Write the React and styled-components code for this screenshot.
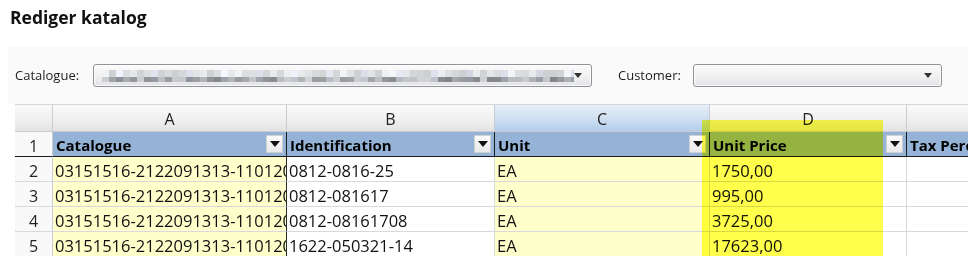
import React from "react";
import styled, { createGlobalStyle } from "styled-components";

const Global = createGlobalStyle`
  html, body { margin: 0; padding: 0; background: #ffffff; }
  body { font-family: "Open Sans", "Noto Sans", sans-serif; color: #000; overflow: hidden; }
`;

const Page = styled.div`
  width: 968px;
  height: 256px;
  overflow: hidden;
`;

const Title = styled.h1`
  margin: 0;
  padding: 5px 0 0 10px;
  font-size: 17.5px;
  line-height: 24px;
  font-weight: 700;
  color: #111;
`;

const FilterPanel = styled.div`
  margin: 18px 0 0 8px;
  height: 57px;
  background: #fafafa;
  display: flex;
  align-items: center;
  padding-left: 7px;
`;

const Label = styled.label`
  font-size: 13px;
  color: #1e1e1e;
  width: ${(p) => p.$w}px;
  margin-left: ${(p) => p.$ml || 0}px;
  flex: none;
  line-height: 16px;
  margin-top: -2px;
`;

const Combo = styled.div`
  box-sizing: border-box;
  width: ${(p) => p.$w}px;
  height: 23px;
  flex: none;
  border: 1px solid #8f9398;
  border-radius: 3px;
  background: linear-gradient(#fbfbfb 0%, #f1f1f1 50%, #e3e4e6 100%);
  box-shadow: inset 0 0 0 1px rgba(255, 255, 255, 0.8);
  display: flex;
  align-items: center;
  padding: 0 9px 0 8px;
`;

const Mosaic = styled.div`
  flex: 1;
  height: 12px;
  display: grid;
  grid-template-rows: 7px 5px;
  grid-auto-flow: column;
  grid-auto-columns: 7px;
  overflow: hidden;
`;

const Tile = styled.span`
  display: block;
`;

const Caret = styled.span`
  margin-left: auto;
  width: 0;
  height: 0;
  border-left: 4px solid transparent;
  border-right: 4px solid transparent;
  border-top: 5px solid #333;
  flex: none;
`;

const GridWrap = styled.div`
  position: relative;
  margin-left: 15px;
  width: 953px;
  overflow: hidden;
  border-top: 1px solid #d3d6da;
`;

const Grid = styled.div`
  display: grid;
  grid-template-columns: 38px 234px 208px 215px 197px 160px;
  grid-template-rows: 27px 25px repeat(4, 25px);
  width: max-content;
`;

const Cell = styled.div`
  box-sizing: border-box;
  overflow: hidden;
  white-space: nowrap;
  font-size: 16px;
  line-height: 22px;
  display: flex;
  align-items: center;
`;

const LetterCell = styled(Cell)`
  justify-content: center;
  border-right: 1px solid #c9cdd2;
  border-bottom: 1px solid #c9cdd2;
  color: #222;
  padding-top: 2px;
  background: ${(p) =>
    p.$selected
      ? "linear-gradient(#e6eef8 0%, #d3e2f3 45%, #b3cdea 100%)"
      : "linear-gradient(#fafafa 0%, #f0f0f0 55%, #e3e3e3 100%)"};
`;

const RowNum = styled(Cell)`
  justify-content: center;
  background: #f9f9f9;
  color: #222;
  padding-top: 3px;
  border-right: 1px solid #c9cdd2;
  border-bottom: 1px solid ${(p) => (p.$dark ? "#1b1b1b" : "#d6d9dd")};
`;

const FieldCell = styled(Cell)`
  background: #95b3d7;
  font-weight: 700;
  font-size: 15px;
  padding: 2px 3px 0 3px;
  border-right: 1px solid #1b1b1b;
  border-bottom: 1px solid #1b1b1b;
  gap: 4px;
`;

const FieldName = styled.span`
  flex: 1;
  overflow: hidden;
`;

const FilterBtn = styled.span`
  flex: none;
  box-sizing: border-box;
  width: 17px;
  height: 18px;
  margin-top: -2px;
  background: linear-gradient(#fbfbfb, #e9e9e9);
  border: 1px solid #d0d0d0;
  display: flex;
  align-items: center;
  justify-content: center;

  &::after {
    content: "";
    border-left: 5px solid transparent;
    border-right: 5px solid transparent;
    border-top: 6px solid #111;
  }
`;

const DataCell = styled(Cell)`
  padding: 3px 0 0 2px;
  font-size: 16.5px;
  color: #111;
  background: ${(p) => (p.$tint ? "#ffffcc" : "#ffffff")};
  border-bottom: 1px solid #d6d9dd;
  border-right: 1px solid ${(p) => (p.$frozen ? "#2a2a2a" : "#d6d9dd")};
`;

const Highlight = styled.div`
  position: absolute;
  left: 687px;
  top: 15px;
  width: 181px;
  height: 200px;
  background: #ffff4c;
  mix-blend-mode: multiply;
  pointer-events: none;
`;

const columns = [
  { letter: "A", name: "Catalogue", tint: true, frozen: true },
  { letter: "B", name: "Identification", tint: false },
  { letter: "C", name: "Unit", tint: true, selected: true },
  { letter: "D", name: "Unit Price", tint: false },
  { letter: "E", name: "Tax Percentage", tint: false, noFilter: true },
];

const rows = [
  ["03151516-2122091313-110120", "0812-0816-25", "EA", "1750,00", ""],
  ["03151516-2122091313-110120", "0812-081617", "EA", "995,00", ""],
  ["03151516-2122091313-110120", "0812-08161708", "EA", "3725,00", ""],
  ["03151516-2122091313-110120", "1622-050321-14", "EA", "17623,00", ""],
];

function makeTiles(count, seed) {
  const out = [];
  let s = seed;
  for (let i = 0; i < count; i++) {
    s = (s * 9301 + 49297) % 233280;
    const r = s / 233280;
    const top = Math.round(205 + r * 40);
    s = (s * 9301 + 49297) % 233280;
    const r2 = s / 233280;
    const bot = Math.round(130 + r2 * 80);
    const blue = i % 5 === 2 ? 10 : 0;
    out.push([
      `rgb(${top},${top + 1},${Math.min(255, top + 2 + blue)})`,
      `rgb(${bot},${bot + 2},${Math.min(255, bot + 4 + blue)})`,
    ]);
  }
  return out;
}

const tiles = makeTiles(68, 17);

export default function App() {
  return (
    <Page>
      <Global />
      <Title>Rediger katalog</Title>
      <FilterPanel>
        <Label $w={78}>Catalogue:</Label>
        <Combo $w={499}>
          <Mosaic>
            {tiles.map(([a, b], i) => (
              <React.Fragment key={i}>
                <Tile style={{ background: a }} />
                <Tile style={{ background: b }} />
              </React.Fragment>
            ))}
          </Mosaic>
          <Caret />
        </Combo>
        <Label $w={75} $ml={26}>Customer:</Label>
        <Combo $w={249}>
          <Caret />
        </Combo>
      </FilterPanel>
      <GridWrap>
        <Grid>
          <LetterCell />
          {columns.map((c) => (
            <LetterCell key={c.letter} $selected={c.selected}>
              {c.letter}
            </LetterCell>
          ))}
          <RowNum $dark>1</RowNum>
          {columns.map((c) => (
            <FieldCell key={c.name}>
              <FieldName>{c.name}</FieldName>
              {!c.noFilter && <FilterBtn />}
            </FieldCell>
          ))}
          {rows.map((r, ri) => (
            <React.Fragment key={ri}>
              <RowNum>{ri + 2}</RowNum>
              {r.map((v, ci) => (
                <DataCell
                  key={ci}
                  $tint={columns[ci].tint}
                  $frozen={columns[ci].frozen}
                >
                  {v}
                </DataCell>
              ))}
            </React.Fragment>
          ))}
        </Grid>
        <Highlight />
      </GridWrap>
    </Page>
  );
}
